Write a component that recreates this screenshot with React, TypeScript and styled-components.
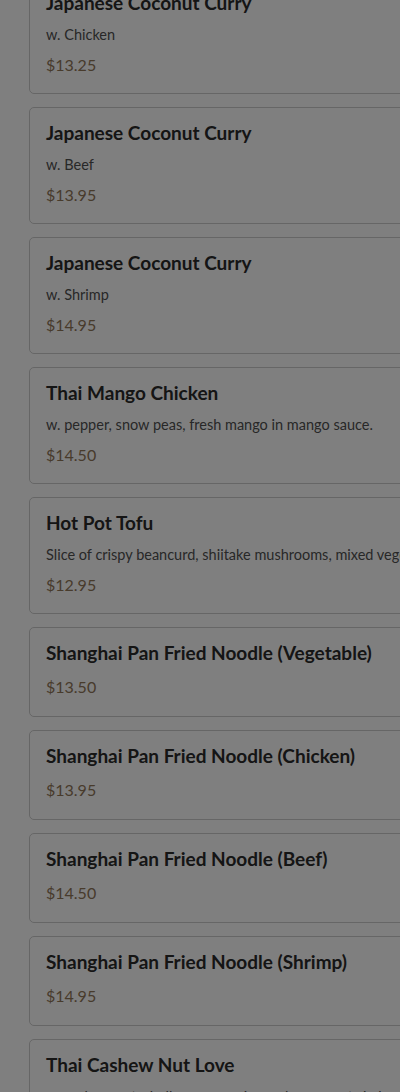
import React from "react";
import styled, { createGlobalStyle } from "styled-components";

const Global = createGlobalStyle`
  html, body { margin: 0; padding: 0; background: #ffffff; overflow: hidden; }
  body { font-family: Lato, "Noto Sans", sans-serif; }
`;

const Page = styled.div`
  width: 400px;
  height: 1092px;
  overflow: hidden;
  position: relative;
  background: #ffffff;
`;

const List = styled.div`
  display: flex;
  flex-direction: column;
  gap: 13px;
  margin-top: -23px;
  padding-left: 29px;
`;

const Card = styled.div<{ $compact?: boolean }>`
  width: 440px;
  box-sizing: border-box;
  border: 1px solid #cccccc;
  border-radius: 5px;
  background: #ffffff;
  padding: 13px 16px ${(p) => (p.$compact ? "18px" : "17px")};
  display: flex;
  flex-direction: column;
`;

const Title = styled.div`
  font-size: 19px;
  line-height: 24px;
  font-weight: 700;
  color: #2a2a2a;
  white-space: nowrap;
`;

const Desc = styled.div`
  margin-top: 10px;
  font-size: 14.5px;
  line-height: 20px;
  color: #505050;
  white-space: nowrap;
`;

const Price = styled.div<{ $compact?: boolean }>`
  margin-top: ${(p) => (p.$compact ? "11px" : "9px")};
  font-size: 16px;
  line-height: 22px;
  color: #907658;
`;

const Overlay = styled.div`
  position: absolute;
  inset: 0;
  background: rgba(0, 0, 0, 0.5);
`;

type Item = { title: string; desc?: string; price: string };

const items: Item[] = [
  { title: "Japanese Coconut Curry", desc: "w. Chicken", price: "$13.25" },
  { title: "Japanese Coconut Curry", desc: "w. Beef", price: "$13.95" },
  { title: "Japanese Coconut Curry", desc: "w. Shrimp", price: "$14.95" },
  { title: "Thai Mango Chicken", desc: "w. pepper, snow peas, fresh mango in mango sauce.", price: "$14.50" },
  { title: "Hot Pot Tofu", desc: "Slice of crispy beancurd, shiitake mushrooms, mixed vegetables in hot pot.", price: "$12.95" },
  { title: "Shanghai Pan Fried Noodle (Vegetable)", price: "$13.50" },
  { title: "Shanghai Pan Fried Noodle (Chicken)", price: "$13.95" },
  { title: "Shanghai Pan Fried Noodle (Beef)", price: "$14.50" },
  { title: "Shanghai Pan Fried Noodle (Shrimp)", price: "$14.95" },
  { title: "Thai Cashew Nut Love", desc: "w. cashew nuts, bell pepper, onion, celery, carrots in brown sauce.", price: "$14.50" },
];

export default function App() {
  return (
    <>
      <Global />
      <Page>
        <List>
          {items.map((it, i) => (
            <Card key={i} $compact={!it.desc}>
              <Title>{it.title}</Title>
              {it.desc && <Desc>{it.desc}</Desc>}
              <Price $compact={!it.desc}>{it.price}</Price>
            </Card>
          ))}
        </List>
        <Overlay />
      </Page>
    </>
  );
}
